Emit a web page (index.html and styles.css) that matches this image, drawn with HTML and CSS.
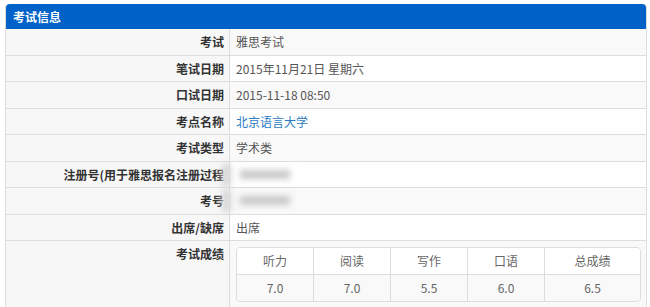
FILE: index.html
```html
<!DOCTYPE html>
<html lang="zh-CN">
<head>
    <meta charset="UTF-8">
    <title>考试信息</title>
    <link rel="stylesheet" href="styles.css">
</head>
<body>
    <div class="panel">
        <div class="panel-heading">考试信息</div>
        <table class="info-table">
            <tr>
                <th>考试</th>
                <td>雅思考试</td>
            </tr>
            <tr>
                <th>笔试日期</th>
                <td>2015年11月21日 星期六</td>
            </tr>
            <tr>
                <th>口试日期</th>
                <td>2015-11-18 08:50</td>
            </tr>
            <tr>
                <th>考点名称</th>
                <td><a href="#">北京语言大学</a></td>
            </tr>
            <tr>
                <th>考试类型</th>
                <td>学术类</td>
            </tr>
            <tr>
                <th>注册号(用于雅思报名注册过程</th>
                <td class="masked"><span class="mask mask-edge"></span><span class="mask mask-text"></span></td>
            </tr>
            <tr>
                <th>考号</th>
                <td class="masked"><span class="mask mask-edge"></span><span class="mask mask-text"></span></td>
            </tr>
            <tr>
                <th>出席/缺席</th>
                <td>出席</td>
            </tr>
            <tr>
                <th class="top">考试成绩</th>
                <td class="scores-cell">
                    <table class="scores">
                        <tr>
                            <th>听力</th>
                            <th>阅读</th>
                            <th>写作</th>
                            <th>口语</th>
                            <th class="total">总成绩</th>
                        </tr>
                        <tr>
                            <td>7.0</td>
                            <td>7.0</td>
                            <td>5.5</td>
                            <td>6.0</td>
                            <td>6.5</td>
                        </tr>
                    </table>
                </td>
            </tr>
        </table>
    </div>
</body>
</html>
```

FILE: styles.css
```css
body {
    margin: 0;
    padding: 4px 5px;
    font-family: "Noto Sans CJK SC", "Liberation Sans", sans-serif;
    font-size: 12px;
    color: #555;
    background: #fff;
}
.panel {
    width: 640px;
    border: 1px solid #ddd;
    border-top: none;
    border-radius: 4px 4px 0 0;
}
.panel-heading {
    height: 25px;
    line-height: 25px;
    padding-left: 7px;
    background-color: #0062c8;
    border-radius: 4px 4px 0 0;
    color: #fff;
    font-weight: bold;
}
.info-table {
    width: 100%;
    border-collapse: collapse;
}
.info-table > tbody > tr > th,
.info-table > tbody > tr > td {
    height: 17.5px;
    line-height: 17.5px;
    padding: 4px 6px;
    border-top: 1px solid #ddd;
    text-align: left;
    font-weight: normal;
}
.info-table > tbody > tr:first-child > th,
.info-table > tbody > tr:first-child > td {
    border-top: none;
}
.info-table > tbody > tr > th {
    width: 212px;
    padding-right: 5px;
    text-align: right;
    font-weight: bold;
    color: #333;
    background-color: #f7f7f7;
    border-right: 1px solid #ddd;
    white-space: nowrap;
}
.info-table > tbody > tr:nth-child(odd) > td {
    background-color: #f9f9f9;
}
.info-table > tbody > tr > th.top {
    vertical-align: top;
    padding-top: 4px;
}
.info-table a {
    color: #2a7bbf;
    text-decoration: none;
}

/* hidden personal numbers */
.masked {
    position: relative;
}
.mask {
    display: block;
    background: #c8c8c8;
    filter: blur(3px);
}
.mask-edge {
    position: absolute;
    left: -8px;
    top: 2px;
    width: 9px;
    height: 22px;
    background: #d6d6d6;
}
.mask-text {
    width: 50px;
    height: 9px;
    margin-left: 4px;
}

.info-table > tbody > tr > td.scores-cell {
    padding: 6px 5px 7px 6px;
}
.scores {
    width: 100%;
    table-layout: fixed;
    border: 1px solid #ddd;
    border-radius: 4px;
    border-spacing: 0;
    overflow: hidden;
}
.scores th,
.scores td {
    height: 26px;
    padding: 0;
    text-align: center;
    font-weight: normal;
    color: #666;
    border-left: 1px solid #ddd;
}
.scores th {
    width: 76px;
    background-color: #fff;
}
.scores th:first-child,
.scores td:first-child {
    border-left: none;
}
.scores th.total {
    width: auto;
}
.scores td {
    border-top: 1px solid #ddd;
    background-color: #f9f9f9;
}
```
